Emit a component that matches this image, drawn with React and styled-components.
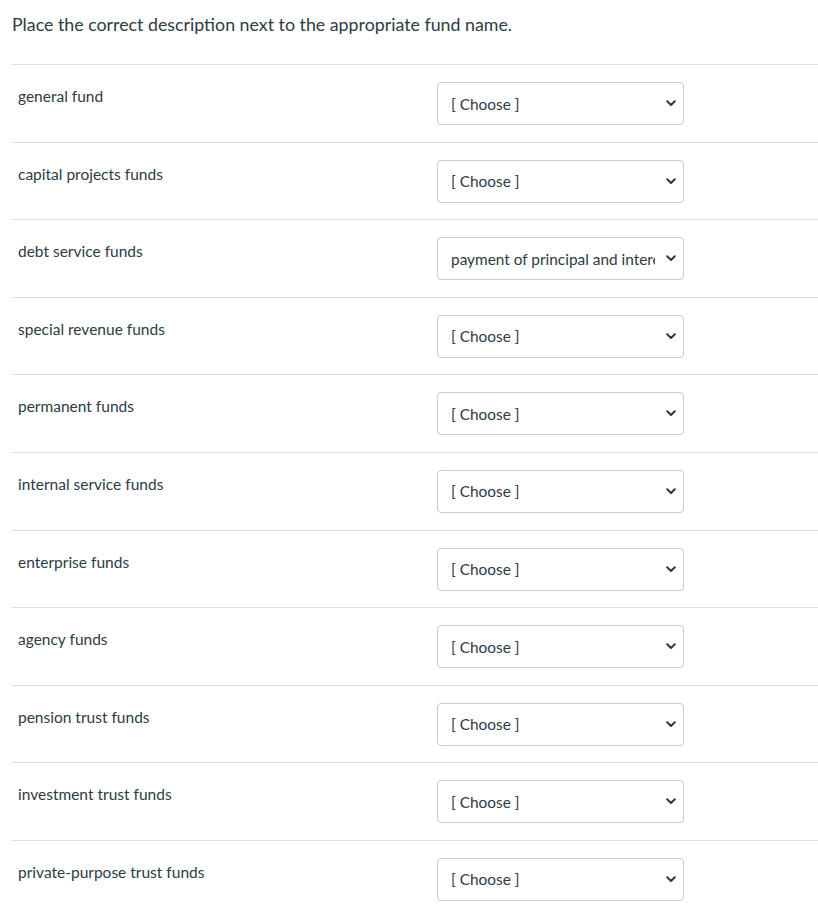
import React from "react";
import styled, { createGlobalStyle } from "styled-components";

const Global = createGlobalStyle`
  html, body { margin: 0; padding: 0; background: #fff; }
  body { font-family: Lato, "Open Sans", Arial, sans-serif; color: #2d3b45; }
`;

const Page = styled.div`
  padding: 12px 0 0 12px;
  width: 806px;
`;

const Title = styled.p`
  margin: 0 0 28px 0;
  font-size: 17.8px;
  line-height: 24px;
  color: #2d3b45;
`;

const List = styled.div`
  display: flex;
  flex-direction: column;
`;

const Row = styled.div`
  display: grid;
  grid-template-columns: 425px 247px 1fr;
  align-items: start;
  height: 77.6px;
  box-sizing: border-box;
  border-top: 1px solid #dddddd;
`;

const Label = styled.div`
  padding: 21px 0 0 6px;
  font-size: 15.5px;
  line-height: 20px;
  color: #2d3b45;
`;

const SelectWrap = styled.div`
  position: relative;
  margin-top: 17px;
  height: 43px;
`;

const Select = styled.select`
  appearance: none;
  -webkit-appearance: none;
  width: 247px;
  height: 43px;
  box-sizing: border-box;
  border: 1px solid #c7cdd1;
  border-radius: 4px;
  background: #fff;
  padding: 0 28px 0 13px;
  font-family: Lato, "Open Sans", Arial, sans-serif;
  font-size: 15.4px;
  color: #2d3b45;
  outline: none;
`;

const Chevron = styled.svg`
  position: absolute;
  right: 8px;
  top: 18px;
  width: 10px;
  height: 7px;
  pointer-events: none;
`;

const DEBT = "payment of principal and interest on general long-term debt";

const rows = [
  ["general fund", ""],
  ["capital projects funds", ""],
  ["debt service funds", DEBT],
  ["special revenue funds", ""],
  ["permanent funds", ""],
  ["internal service funds", ""],
  ["enterprise funds", ""],
  ["agency funds", ""],
  ["pension trust funds", ""],
  ["investment trust funds", ""],
  ["private-purpose trust funds", ""],
];

function FundSelect({ value }) {
  return (
    <SelectWrap>
      <Select defaultValue={value}>
        <option value="">[ Choose ]</option>
        <option value={DEBT}>{DEBT}</option>
      </Select>
      <Chevron viewBox="0 0 10 7">
        <path d="M1.2 1.2 L5 5 L8.8 1.2" fill="none" stroke="#2d3b45" strokeWidth="2" strokeLinecap="round" strokeLinejoin="round" />
      </Chevron>
    </SelectWrap>
  );
}

export default function App() {
  return (
    <>
      <Global />
      <Page>
        <Title>Place the correct description next to the appropriate fund name.</Title>
        <List>
          {rows.map(([name, val]) => (
            <Row key={name}>
              <Label>{name}</Label>
              <FundSelect value={val} />
              <div />
            </Row>
          ))}
        </List>
      </Page>
    </>
  );
}
